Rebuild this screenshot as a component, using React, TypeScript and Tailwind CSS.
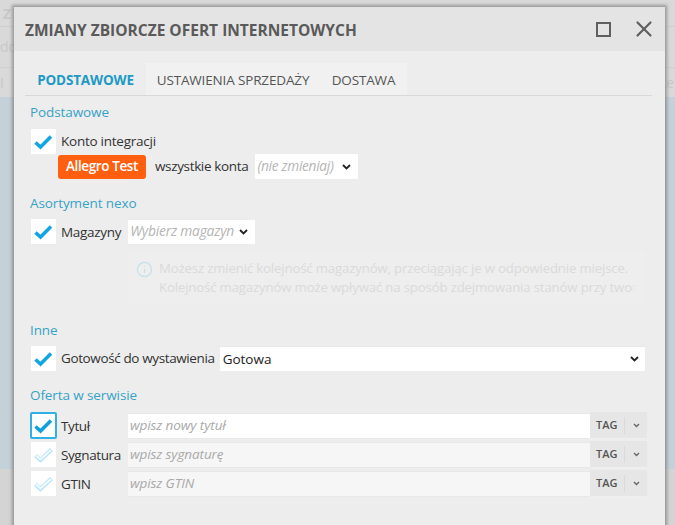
import { Info, X } from "lucide-react";

function Check({ faded, focused }: { faded?: boolean; focused?: boolean }) {
  const box = focused
    ? "w-[27px] h-[27px] -ml-[1px] border-2 border-[#2fb0e6] rounded-[2px] bg-white"
    : "w-[25px] h-[25px] bg-white";
  return (
    <div className={`${box} flex items-center justify-center shrink-0`}>
      {faded ? (
        <svg width="19" height="16" viewBox="0 0 19 16" fill="none">
          <path d="M1.5 8.5l5 4.5L17.5 2.5" stroke="#b6e3f7" strokeWidth="4" />
          <path d="M2 8.5l4.5 4L17 3" stroke="#f4fbfe" strokeWidth="1.8" />
        </svg>
      ) : (
        <svg width="19" height="16" viewBox="0 0 19 16" fill="none">
          <path d="M1.5 8.5l5 4.5L17 2.5" stroke={focused ? "#0f9fdc" : "#12a5e3"} strokeWidth="3.5" />
        </svg>
      )}
    </div>
  );
}

function Chevron({ small }: { small?: boolean }) {
  return small ? (
    <svg width="7" height="5" viewBox="0 0 7 5" fill="none">
      <path d="M1 1l2.5 2.5L6 1" stroke="#666" strokeWidth="1.4" />
    </svg>
  ) : (
    <svg width="9" height="6" viewBox="0 0 9 6" fill="none">
      <path d="M1 1l3.5 3.5L8 1" stroke="#222" strokeWidth="1.8" />
    </svg>
  );
}

function SectionTitle({ children }: { children: string }) {
  return <p className="text-[13.5px] leading-[18px] text-[#36a3c6] tracking-[-0.1px]">{children}</p>;
}

function OfferRow({ label, placeholder, active }: { label: string; placeholder: string; active?: boolean }) {
  return (
    <div className="flex items-center h-[29px] pl-[1px]">
      <div className="w-[30px] flex">
        <Check faded={!active} focused={active} />
      </div>
      <span className="w-[67px] pt-[2px] text-[13.5px] text-[#333] tracking-[-0.4px]">{label}</span>
      <div className={`w-[462px] h-[26px] flex items-center pl-[2px] border-b border-t border-[#e8e8e8] ${active ? "bg-white" : "bg-[#f6f6f6]"}`}>
        <span className="text-[13.5px] italic text-[#a9a9a9] tracking-[-0.1px]">{placeholder}</span>
      </div>
      <div className="w-[57px] h-[27px] flex items-center bg-[#e6e6e6] border-b border-[#efefef]">
        <span className="w-[34px] pl-[6px] text-[11px] font-semibold text-[#555]">TAG</span>
        <span className="w-px h-[17px] bg-[#dadada]" />
        <span className="flex-1 flex justify-center"><Chevron small /></span>
      </div>
    </div>
  );
}

export default function App() {
  return (
    <div className="relative w-[675px] h-[525px] overflow-hidden bg-[#ececec] font-['Open_Sans',sans-serif]">
      {/* backdrop */}
      <div className="absolute inset-0 flex flex-col">
        <div className="h-[97px] bg-[#d9d9d9] text-[14px] text-[#c8c8c8] overflow-hidden">
          <div className="h-[27px] border-b border-[#d0d0d0] pl-[3px] pt-[3px] font-bold">Z</div>
          <div className="h-[41px] border-b border-[#d0d0d0] pt-[9px]">do</div>
          <div className="flex justify-between pt-[4px] pr-[1px]"><span>I</span><span>te</span></div>
        </div>
        <div className="h-[372px] bg-[#c5d1d8]" />
        <div className="flex-1 bg-[#d4d4d4]" />
      </div>

      {/* dialog */}
      <div className="absolute left-[14px] top-[7px] w-[651px] h-[530px] bg-[#ededed] shadow-[0_0_3px_2px_rgba(90,90,90,0.5)]">
        <div className="h-[44px] bg-[#e4e4e4] flex items-center pl-[11px]">
          <h1 className="pt-[3px] text-[15.5px] font-bold text-[#5a5a5a]">ZMIANY ZBIORCZE OFERT INTERNETOWYCH</h1>
          <div className="ml-auto flex items-center">
            <div className="w-[15px] h-[15px] border-2 border-[#5f5f5f] mr-[20px]" />
            <X size={26} strokeWidth={2} className="text-[#5f5f5f] mr-[8px]" />
          </div>
        </div>

        <div className="pl-[11px] pt-[12px]">
          <div className="w-[627px] flex h-[33px] border-b border-[#d8d8d8]">
            <div className="w-[121px] pt-[2px] flex items-center justify-center text-[13.5px] font-bold text-[#1e9ac4] tracking-[-0.15px]">PODSTAWOWE</div>
            <div className="w-[174px] pt-[2px] bg-[#f1f1f1] flex items-center justify-center text-[13.5px] text-[#555] tracking-[-0.15px]">USTAWIENIA SPRZEDAŻY</div>
            <div className="w-[87px] pt-[2px] bg-[#f1f1f1] flex items-center justify-center text-[13.5px] text-[#555] tracking-[-0.15px]">DOSTAWA</div>
          </div>

          <div className="pl-[5px] pt-[7px]">
            <SectionTitle>Podstawowe</SectionTitle>
            <div className="flex items-center gap-[5px] mt-[8px] pl-[1px]">
              <Check />
              <span className="text-[13.5px] text-[#333] tracking-[-0.25px]">Konto integracji</span>
            </div>
            <div className="flex items-center h-[25px] ml-[28px]">
              <span className="h-[24px] w-[88px] flex items-center justify-center rounded-[3px] bg-[#ff5f0f] text-white text-[13.5px] font-semibold tracking-[-0.4px]">Allegro Test</span>
              <span className="ml-[9px] text-[13.5px] text-[#333] tracking-[-0.35px]">wszystkie konta</span>
              <div className="ml-[7px] w-[103px] h-[25px] bg-white flex items-center justify-between pl-[2px] pr-[7px]">
                <span className="text-[13.7px] italic text-[#b5b5b5] tracking-[-0.3px]">(nie zmieniaj)</span>
                <Chevron />
              </div>
            </div>

            <div className="mt-[15px]"><SectionTitle>Asortyment nexo</SectionTitle></div>
            <div className="flex items-center gap-[5px] mt-[7px] pl-[1px]">
              <Check />
              <span className="pt-[1px] text-[13.5px] text-[#333] tracking-[-0.3px] mr-[2px]">Magazyny</span>
              <div className="w-[127px] h-[24px] bg-white flex items-center justify-between pl-[2px] pr-[7px]">
                <span className="text-[13.8px] italic text-[#b5b5b5] tracking-[-0.2px]">Wybierz magazyn</span>
                <Chevron />
              </div>
            </div>

            <div className="mt-[7px] ml-[98px] w-[517px] h-[53px] bg-[#eeeeee] flex items-start pt-[8px]">
              <Info size={17} strokeWidth={1.6} className="ml-[8px] mt-[2px] shrink-0 text-[#c4dfec]" />
              <p className="ml-[6px] text-[13.2px] leading-[19px] text-[#dadada] whitespace-nowrap tracking-[-0.15px]">
                Możesz zmienić kolejność magazynów, przeciągając je w odpowiednie miejsce.<br />
                Kolejność magazynów może wpływać na sposób zdejmowania stanów przy two<span className="text-[#e8e8e8]">r</span>
              </p>
            </div>

            <div className="mt-[17px]"><SectionTitle>Inne</SectionTitle></div>
            <div className="flex items-center mt-[7px] pl-[1px]">
              <Check />
              <span className="ml-[5px] text-[13.5px] text-[#333] tracking-[-0.38px]">Gotowość do wystawienia</span>
              <div className="ml-[5px] w-[425px] h-[25px] bg-white flex items-center justify-between pl-[3px] pr-[6px] border-t border-[#e8e8e8]">
                <span className="text-[13.5px] text-[#222]">Gotowa</span>
                <Chevron />
              </div>
            </div>

            <div className="mt-[15px]"><SectionTitle>Oferta w serwisie</SectionTitle></div>
            <div className="mt-[7px]">
              <OfferRow label="Tytuł" placeholder="wpisz nowy tytuł" active />
              <OfferRow label="Sygnatura" placeholder="wpisz sygnaturę" />
              <OfferRow label="GTIN" placeholder="wpisz GTIN" />
            </div>
          </div>
        </div>
      </div>
    </div>
  );
}
